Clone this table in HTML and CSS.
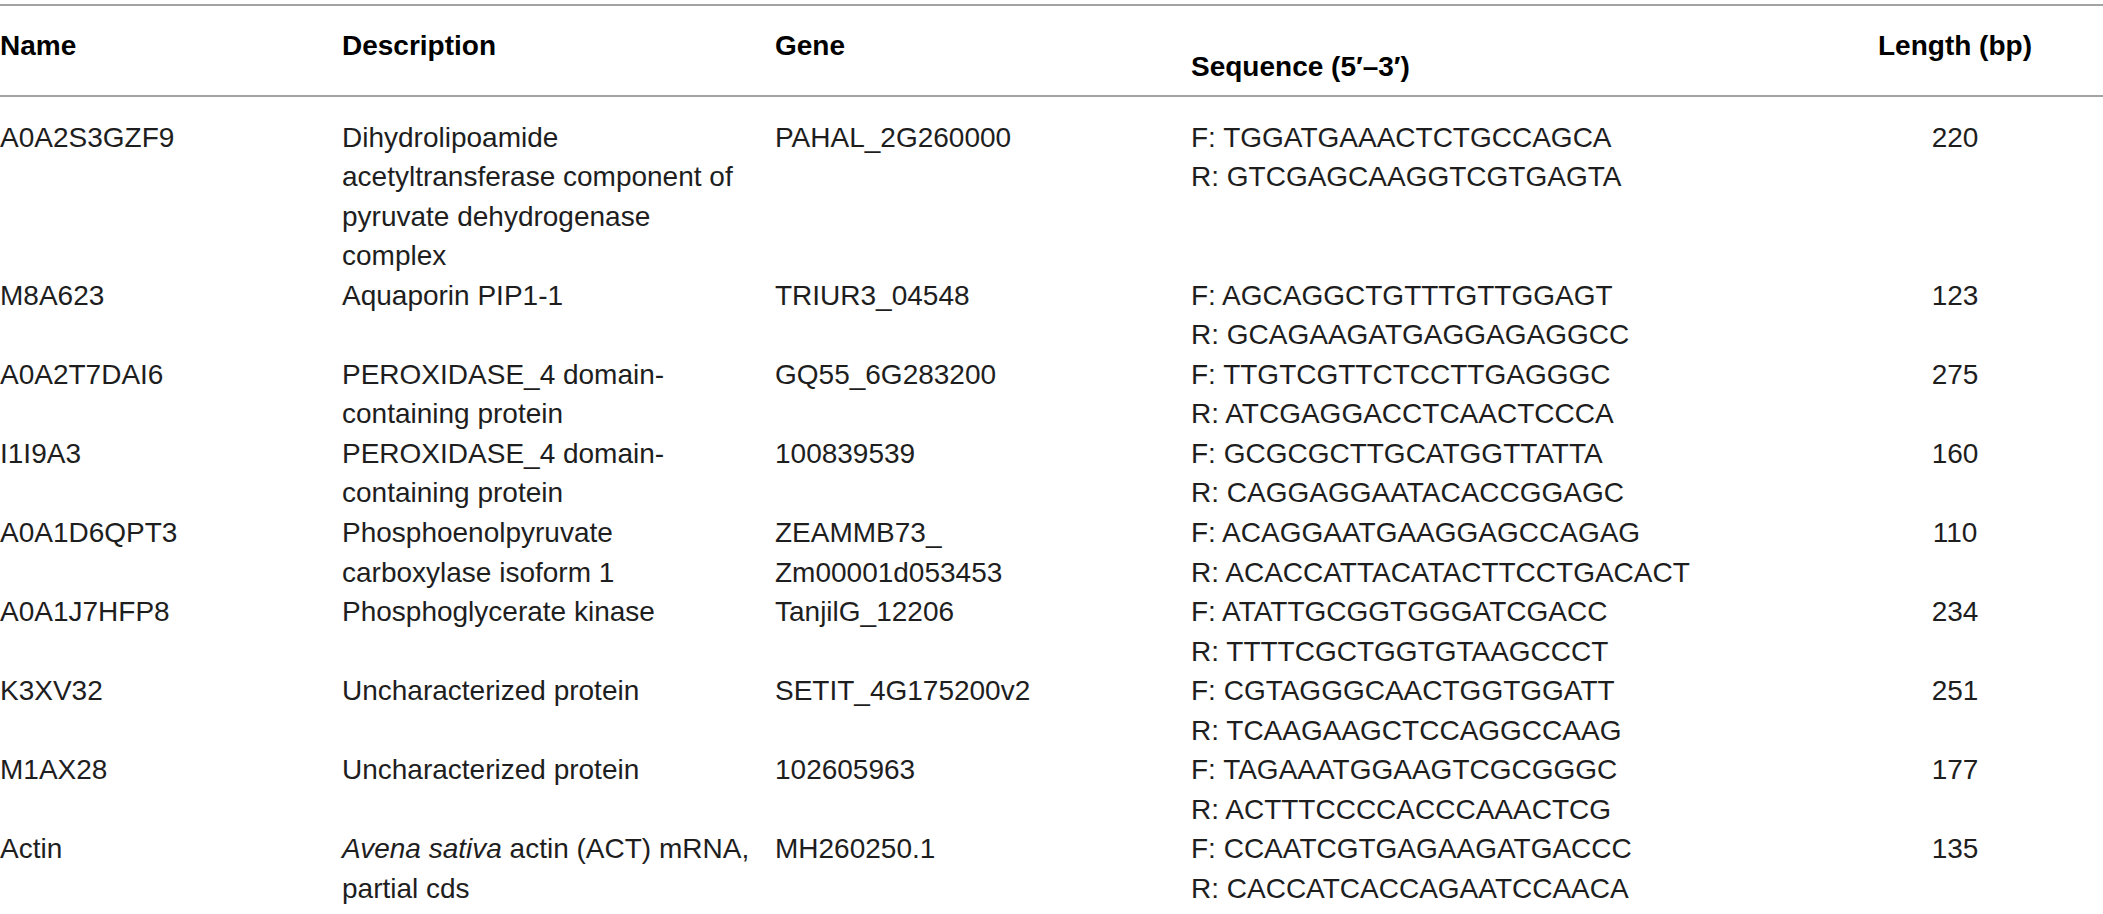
FILE: index.html
```html
<!DOCTYPE html>
<html lang="en">
<head>
<meta charset="utf-8">
<title>Primer table</title>
<link rel="stylesheet" href="styles.css">
</head>
<body>
<table class="primers">
  <colgroup>
    <col class="c-name">
    <col class="c-desc">
    <col class="c-gene">
    <col class="c-seq">
    <col class="c-len">
  </colgroup>
  <thead>
    <tr>
      <th>Name</th>
      <th>Description</th>
      <th>Gene</th>
      <th class="th-seq">Sequence (5′–3′)</th>
      <th class="num">Length (bp)</th>
    </tr>
  </thead>
  <tbody>
    <tr>
      <td>A0A2S3GZF9</td>
      <td>Dihydrolipoamide<br>acetyltransferase component of<br>pyruvate dehydrogenase<br>complex</td>
      <td>PAHAL_2G260000</td>
      <td>F: TGGATGAAACTCTGCCAGCA<br>R: GTCGAGCAAGGTCGTGAGTA</td>
      <td class="num">220</td>
    </tr>
    <tr>
      <td>M8A623</td>
      <td>Aquaporin PIP1-1</td>
      <td>TRIUR3_04548</td>
      <td>F: AGCAGGCTGTTTGTTGGAGT<br>R: GCAGAAGATGAGGAGAGGCC</td>
      <td class="num">123</td>
    </tr>
    <tr>
      <td>A0A2T7DAI6</td>
      <td>PEROXIDASE_4 domain-<br>containing protein</td>
      <td>GQ55_6G283200</td>
      <td>F: TTGTCGTTCTCCTTGAGGGC<br>R: ATCGAGGACCTCAACTCCCA</td>
      <td class="num">275</td>
    </tr>
    <tr>
      <td>I1I9A3</td>
      <td>PEROXIDASE_4 domain-<br>containing protein</td>
      <td>100839539</td>
      <td>F: GCGCGCTTGCATGGTTATTA<br>R: CAGGAGGAATACACCGGAGC</td>
      <td class="num">160</td>
    </tr>
    <tr>
      <td>A0A1D6QPT3</td>
      <td>Phosphoenolpyruvate<br>carboxylase isoform 1</td>
      <td>ZEAMMB73_<br>Zm00001d053453</td>
      <td>F: ACAGGAATGAAGGAGCCAGAG<br>R: ACACCATTACATACTTCCTGACACT</td>
      <td class="num">110</td>
    </tr>
    <tr>
      <td>A0A1J7HFP8</td>
      <td>Phosphoglycerate kinase</td>
      <td>TanjilG_12206</td>
      <td>F: ATATTGCGGTGGGATCGACC<br>R: TTTTCGCTGGTGTAAGCCCT</td>
      <td class="num">234</td>
    </tr>
    <tr>
      <td>K3XV32</td>
      <td>Uncharacterized protein</td>
      <td>SETIT_4G175200v2</td>
      <td>F: CGTAGGGCAACTGGTGGATT<br>R: TCAAGAAGCTCCAGGCCAAG</td>
      <td class="num">251</td>
    </tr>
    <tr>
      <td>M1AX28</td>
      <td>Uncharacterized protein</td>
      <td>102605963</td>
      <td>F: TAGAAATGGAAGTCGCGGGC<br>R: ACTTTCCCCACCCAAACTCG</td>
      <td class="num">177</td>
    </tr>
    <tr>
      <td>Actin</td>
      <td><i>Avena sativa</i> actin (ACT) mRNA,<br>partial cds</td>
      <td>MH260250.1</td>
      <td>F: CCAATCGTGAGAAGATGACCC<br>R: CACCATCACCAGAATCCAACA</td>
      <td class="num">135</td>
    </tr>
  </tbody>
</table>
</body>
</html>
```

FILE: styles.css
```css
html, body {
  margin: 0;
  padding: 0;
  background: #ffffff;
}

body {
  font-family: "Liberation Sans", Arial, sans-serif;
  color: #1e1e1e;
}

.primers {
  margin-top: 4px;
  width: 2103px;
  table-layout: fixed;
  border-collapse: separate;
  border-spacing: 0;
  font-size: 28px;
  line-height: 39.55px;
}

.c-name { width: 342px; }
.c-desc { width: 433px; }
.c-gene { width: 416px; }
.c-seq  { width: 616px; }
.c-len  { width: 296px; }

.primers th {
  text-align: left;
  vertical-align: top;
  font-weight: 700;
  color: #000000;
  padding: 19.5px 0 30px 0;
  border-top: 2px solid #a3a3a3;
  border-bottom: 2px solid #a3a3a3;
}

.primers th.th-seq {
  padding-top: 41px;
  padding-bottom: 8.5px;
}

.primers td {
  vertical-align: top;
  padding: 0;
  white-space: nowrap;
  font-weight: 400;
}

.primers tbody tr:first-child td {
  padding-top: 20.5px;
}

.primers .num {
  text-align: center;
}

.primers i {
  font-style: italic;
}
```
